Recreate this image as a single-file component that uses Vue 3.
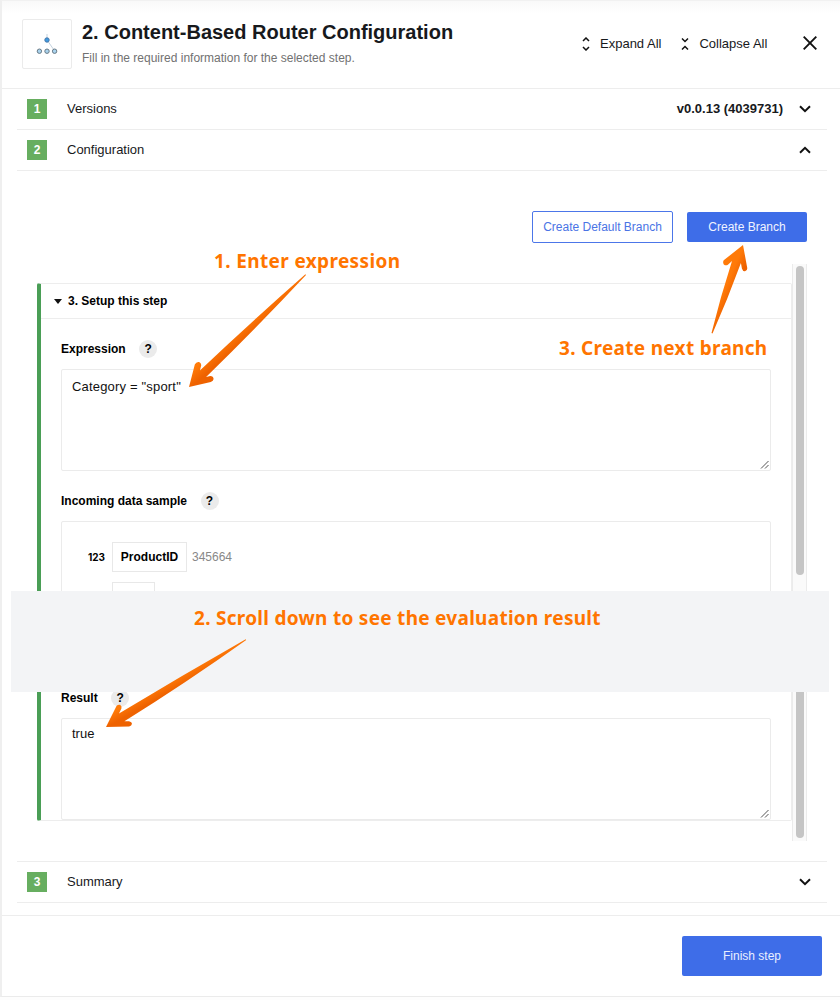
<script setup>
const arrows = [
  {
    id: 'a1',
    d: 'M189 387L194.8 364.6Q196.2 361.6 199.1 362.1Q201.4 363 201.2 365.5L199.9 370.4Q252 321.2 305.4 274.3L306 275Q257.2 327.2 206.1 377L210.2 376.1Q213.4 376.3 213.6 379Q213.4 381.1 210.8 381.9Z',
    x1: 244, y1: 324, x2: 252, y2: 333
  },
  {
    id: 'a2',
    d: 'M106 727L116.5 706.1Q118 704.2 120.1 704.8Q122.2 706.4 121.4 708.5L119 713.5Q182 675.4 245.7 639.2L246.2 640Q186.5 682.5 124.4 721.3L129 721.2Q132 721.9 132 723.8Q131.7 726 129.1 726.4Z',
    x1: 174, y1: 678, x2: 179, y2: 687
  },
  {
    id: 'a3',
    d: 'M743 245L723.7 260.3Q722.5 262.5 723.8 264.4Q725.8 266 727.9 264.8L732 261Q720.6 296.3 711.5 333L712.5 333.4Q727.8 299 740.9 263L741.9 268.5Q742.9 271.6 745 271.3Q747.2 271 747.3 268.2Z',
    x1: 726, y1: 285, x2: 735, y2: 289
  }
]
</script>

<template>
  <div class="page">
    <main class="panel">
      <header class="head">
        <div class="logo">
          <svg width="24" height="24" viewBox="0 0 24 24" fill="none">
            <path d="M12 3v4M12 9L19 19" stroke="#b4c5d5" stroke-width=".8" />
            <circle cx="12" cy="9" r="2.2" fill="#3f9be0" stroke="#4777aa" />
            <circle cx="4.4" cy="20.2" r="2.2" fill="#a9d3ee" stroke="#687985" />
            <circle cx="12" cy="20.2" r="2.2" fill="#a9d3ee" stroke="#687985" />
            <circle cx="19.6" cy="20.2" r="2.2" fill="#a9d3ee" stroke="#687985" />
          </svg>
        </div>
        <div class="titles">
          <h1>2. Content-Based Router Configuration</h1>
          <p>Fill in the required information for the selected step.</p>
        </div>
        <button class="tool">
          <svg width="8" height="14" viewBox="0 0 8 14"><path d="M1 4L4 1l3 3M1 10l3 3 3-3" /></svg>
          <span>Expand All</span>
        </button>
        <button class="tool tool-collapse">
          <svg width="8" height="14" viewBox="0 0 8 14"><path d="M1 1.5l3 3 3-3M1 12.5l3-3 3 3" /></svg>
          <span>Collapse All</span>
        </button>
        <button class="close"><svg width="14" height="14" viewBox="0 0 14 14"><path d="M.7.7l12.6 12.6M13.3.7L.7 13.3" /></svg></button>
      </header>

      <section class="row">
        <span class="num">1</span><span class="name">Versions</span>
        <strong class="version">v0.0.13 (4039731)</strong>
        <svg class="chev" width="12" height="8" viewBox="0 0 12 8"><path d="M1 1.2l5 5 5-5" /></svg>
      </section>
      <section class="row">
        <span class="num">2</span><span class="name">Configuration</span>
        <svg class="chev" width="12" height="8" viewBox="0 0 12 8"><path d="M1 6.8l5-5 5 5" /></svg>
      </section>

      <section class="body">
        <div class="actions">
          <button class="outline">Create Default Branch</button>
          <button class="solid">Create Branch</button>
        </div>
        <div class="scroller">
          <div class="card">
            <div class="card-head"><i class="caret"></i><span>3. Setup this step</span></div>
            <div class="label"><span>Expression</span><b>?</b></div>
            <div class="area">
              <span class="expr">Category = "sport"</span>
              <svg class="grip" width="9" height="9" viewBox="0 0 9 9"><path d="M1 8.5L8.5 1M5 8.5l3.5-3.5" /></svg>
            </div>
            <div class="label"><span>Incoming data sample</span><b>?</b></div>
            <div class="sample">
              <div class="field"><span class="type">123</span><span class="key">ProductID</span><span class="val">345664</span></div>
              <div class="field"><span class="type"></span><span class="key short"></span></div>
            </div>
            <div class="label"><span>Result</span><b>?</b></div>
            <div class="area result">
              <span>true</span>
              <svg class="grip" width="9" height="9" viewBox="0 0 9 9"><path d="M1 8.5L8.5 1M5 8.5l3.5-3.5" /></svg>
            </div>
          </div>
          <div class="track"><div class="thumb upper"></div><div class="thumb lower"></div></div>
        </div>
      </section>

      <section class="row summary">
        <span class="num">3</span><span class="name">Summary</span>
        <svg class="chev" width="12" height="8" viewBox="0 0 12 8"><path d="M1 1.2l5 5 5-5" /></svg>
      </section>
      <footer class="foot"><button class="finish">Finish step</button></footer>
    </main>

    <div class="strip"></div>
    <div class="note n1">1. Enter expression</div>
    <div class="note n2">2. Scroll down to see the evaluation result</div>
    <div class="note n3">3. Create next branch</div>
    <svg class="arrows" width="840" height="1000" viewBox="0 0 840 1000">
      <defs>
        <linearGradient v-for="a in arrows" :id="a.id" :key="a.id" gradientUnits="userSpaceOnUse" :x1="a.x1" :y1="a.y1" :x2="a.x2" :y2="a.y2">
          <stop offset="0" stop-color="#ff7a08" /><stop offset="1" stop-color="#ee6200" />
        </linearGradient>
      </defs>
      <path v-for="a in arrows" :key="a.id" :d="a.d" :fill="`url(#${a.id})`" />
    </svg>
  </div>
</template>

<style>
body { margin: 0; background: #fff; }
</style>

<style scoped>
* { box-sizing: border-box; }
.page { position: relative; width: 840px; height: 1000px; overflow: hidden; background: #fdfdfd; font-family: "Liberation Sans", Arial, sans-serif; font-size: 13px; color: #17191c; }
.panel { height: 997px; border-left: 2px solid #efefef; border-top: 1px solid #f1f1f1; border-bottom: 1px solid #ebebeb; background: #fff; }
button { font: inherit; color: inherit; background: none; border: 0; padding: 0; }
h1, p { margin: 0; white-space: nowrap; }
svg { display: block; flex: none; }
.head { height: 88px; border-bottom: 1px solid #ededed; padding: 18px 0 0 20px; display: flex; align-items: flex-start; background: linear-gradient(#f9f9f9, #fff 12px); }
.logo { width: 50px; height: 50px; flex: none; border: 1px solid #ebebeb; border-radius: 2px; background: #fff; padding: 11px 0 0 12px; }
.titles { width: 500px; margin-left: 10px; }
h1 { font-size: 20px; line-height: 24px; margin-top: 1px; }
p { font-size: 12px; line-height: 16px; margin-top: 6px; color: #717171; }
.tool { display: flex; align-items: center; height: 20px; margin-top: 15px; white-space: nowrap; font-size: 13px; }
.tool svg, .close svg, .chev { fill: none; stroke: #111; stroke-width: 1.5; }
.tool span { margin-left: 10px; padding-bottom: 1px; }
.tool-collapse { margin-left: 20px; }
.close { margin: 17px 0 0 36px; }
.close svg { stroke-width: 1.9; }
.row { height: 41px; margin: 0 13px 0 15px; padding: 0 16px 0 10px; border-bottom: 1px solid #ededed; display: flex; align-items: center; }
.num { width: 20px; height: 20px; background: #67ae60; color: #fff; font-weight: bold; font-size: 12px; line-height: 20px; text-align: center; }
.name { margin-left: 20px; padding-bottom: 1px; font-size: 13px; }
.version { margin-left: auto; margin-right: 16px; padding-bottom: 1px; }
.chev { margin-left: auto; stroke-width: 2; }
.version + .chev { margin-left: 0; }
.body { height: 690px; padding: 40px 33px 0 35px; }
.actions { display: flex; justify-content: flex-end; align-items: center; gap: 14px; height: 32px; white-space: nowrap; font-size: 12px; }
.outline { width: 141px; height: 32px; border: 1px solid #4c76e9; border-radius: 2px; color: #4a74e5; }
.solid { width: 120px; height: 30px; border-radius: 2px; background: #3e6de8; color: #f0f4ff; }
.scroller { display: flex; height: 577px; margin-top: 21px; }
.card { width: 755px; height: 538px; margin-top: 19px; padding: 0 20px; border: 1px solid #ededed; border-left: 4px solid #4a9e56; border-radius: 2px; }
.card-head { height: 35px; margin: 0 -20px; padding-left: 13px; border-bottom: 1px solid #ededed; display: flex; align-items: center; gap: 6px; font-weight: bold; color: #000; font-size: 12px; }
.caret { border: 4px solid transparent; border-top: 5px solid #111; border-bottom: 0; }
.label { height: 20px; margin-top: 20px; display: flex; align-items: center; gap: 13.5px; font-weight: bold; font-size: 12px; color: #000; }
.label b { width: 18px; height: 18px; border-radius: 50%; background: #ebebeb; text-align: center; line-height: 18px; font-size: 12px; }
.area { position: relative; width: 710px; height: 102px; margin-top: 10px; padding: 9px 10px; border: 1px solid #ebebeb; border-radius: 2px; line-height: 16px; color: #111; font-size: 13px; }
.expr { letter-spacing: .18px; }
.result { padding-top: 7px; }
.grip { position: absolute; right: 1px; bottom: 1px; fill: none; stroke: #555; stroke-width: 1; }
.sample { width: 710px; height: 147px; margin-top: 10px; padding: 20px 26px; border: 1px solid #ebebeb; border-radius: 2px; }
.field { display: flex; align-items: center; margin-bottom: 10px; }
.type { width: 24px; font-family: Inter, sans-serif; font-weight: bold; font-size: 10px; color: #000; }
.key { width: 75px; height: 30px; border: 1px solid #e8e8e8; font-weight: bold; line-height: 28px; text-align: center; font-size: 12px; color: #000; }
.short { width: 43px; }
.val { margin-left: 5px; font-size: 12px; color: #888; }
.track { width: 15px; border: solid #ebebeb; border-width: 0 1px; background: #fafafa; padding: 2px 0 0 3px; }
.thumb { width: 8px; background: #c5c5c5; }
.upper { height: 309px; border-radius: 4px; }
.lower { height: 238px; margin-top: 25px; border-radius: 0 0 4px 4px; }
.summary { border-top: 1px solid #ededed; height: 42px; padding-bottom: 1px; }
.foot { height: 81px; margin-top: 12px; border-top: 1px solid #ededed; display: flex; align-items: center; justify-content: flex-end; padding-right: 18px; }
.finish { width: 140px; height: 40px; border-radius: 2px; background: #3e6de8; color: #e9efff; font-size: 12px; }
.strip { position: absolute; left: 11px; top: 591px; width: 818px; height: 101px; background: #f3f4f6; }
.note { position: absolute; font: bold 19px/26px "Noto Sans", sans-serif; letter-spacing: .28px; color: #ff7500; white-space: nowrap; }
.n1 { left: 214px; top: 248px; letter-spacing: .36px; }
.n2 { left: 194px; top: 605px; }
.n3 { left: 559px; top: 335px; letter-spacing: .3px; }
.arrows { position: absolute; left: 0; top: 0; pointer-events: none; }
</style>
